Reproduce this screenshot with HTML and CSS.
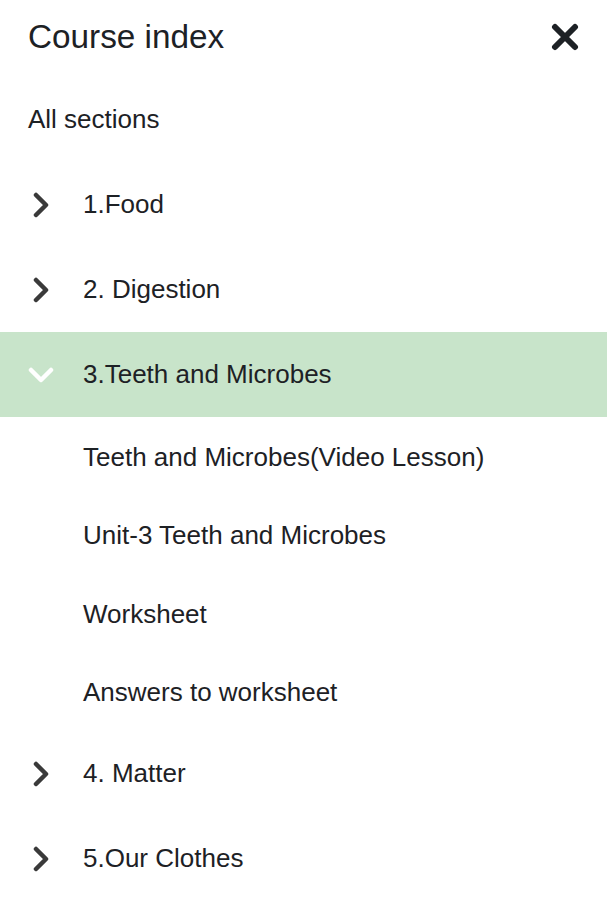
FILE: index.html
```html
<!DOCTYPE html>
<html lang="en">
<head>
<meta charset="utf-8">
<title>Course index</title>
<link rel="stylesheet" href="styles.css">
</head>
<body>
<div class="drawer">
  <header class="drawer-header">
    <h2 class="drawer-title">Course index</h2>
    <button class="close-btn" aria-label="Close">
      <svg width="28" height="28" viewBox="0 0 28 28"><path d="M4 4 L24 24 M24 4 L4 24" stroke="#1d2125" stroke-width="6" stroke-linecap="round" fill="none"/></svg>
    </button>
  </header>
  <div class="all-sections">All sections</div>
  <ul class="sections">
    <li class="section">
      <span class="chev"><svg width="18" height="26" viewBox="0 0 18 26"><path d="M4 3 L14 13 L4 23" stroke="#3a3a3a" stroke-width="4.5" stroke-linecap="round" stroke-linejoin="round" fill="none"/></svg></span>
      <span class="label">1.Food</span>
    </li>
    <li class="section">
      <span class="chev"><svg width="18" height="26" viewBox="0 0 18 26"><path d="M4 3 L14 13 L4 23" stroke="#3a3a3a" stroke-width="4.5" stroke-linecap="round" stroke-linejoin="round" fill="none"/></svg></span>
      <span class="label">2. Digestion</span>
    </li>
    <li class="section active">
      <span class="chev"><svg width="26" height="18" viewBox="0 0 26 18"><path d="M3 4 L13 14 L23 4" stroke="#ffffff" stroke-width="4.5" stroke-linecap="round" stroke-linejoin="round" fill="none"/></svg></span>
      <span class="label">3.Teeth and Microbes</span>
    </li>
    <li class="item">Teeth and Microbes(Video Lesson)</li>
    <li class="item">Unit-3 Teeth and Microbes</li>
    <li class="item">Worksheet</li>
    <li class="item">Answers to worksheet</li>
    <li class="section">
      <span class="chev"><svg width="18" height="26" viewBox="0 0 18 26"><path d="M4 3 L14 13 L4 23" stroke="#3a3a3a" stroke-width="4.5" stroke-linecap="round" stroke-linejoin="round" fill="none"/></svg></span>
      <span class="label">4. Matter</span>
    </li>
    <li class="section">
      <span class="chev"><svg width="18" height="26" viewBox="0 0 18 26"><path d="M4 3 L14 13 L4 23" stroke="#3a3a3a" stroke-width="4.5" stroke-linecap="round" stroke-linejoin="round" fill="none"/></svg></span>
      <span class="label">5.Our Clothes</span>
    </li>
  </ul>
</div>
</body>
</html>
```
FILE: styles.css
```css
* { box-sizing: border-box; }
html, body {
  margin: 0;
  padding: 0;
  background: #ffffff;
}
body {
  font-family: "Liberation Sans", Arial, sans-serif;
  color: #1d2125;
  width: 609px;
  height: 900px;
  overflow: hidden;
}
.drawer {
  display: flex;
  flex-direction: column;
}
.drawer-header {
  height: 77px;
  display: flex;
  align-items: center;
  justify-content: space-between;
  padding: 0 30px 4px 28px;
}
.drawer-title {
  margin: 0;
  font-size: 33.3px;
  font-weight: 400;
  line-height: 1.2;
  color: #1d2125;
}
.close-btn {
  border: 0;
  background: none;
  padding: 0;
  width: 28px;
  height: 28px;
  display: flex;
}
.all-sections {
  height: 85px;
  display: flex;
  align-items: center;
  padding-left: 28px;
  font-size: 26px;
  color: #1d2125;
}
.sections {
  list-style: none;
  margin: 0;
  padding: 0;
}
.section {
  height: 85px;
  display: flex;
  align-items: center;
  font-size: 26px;
}
.section .chev {
  width: 83px;
  display: flex;
  justify-content: flex-start;
  padding-left: 32px;
}
.section.active {
  background: #c8e4ca;
  margin-right: 2px;
}
.section.active .chev {
  padding-left: 28px;
}
.item {
  height: 78.5px;
  display: flex;
  align-items: center;
  padding-left: 83px;
  padding-top: 2px;
  font-size: 26px;
}
```
